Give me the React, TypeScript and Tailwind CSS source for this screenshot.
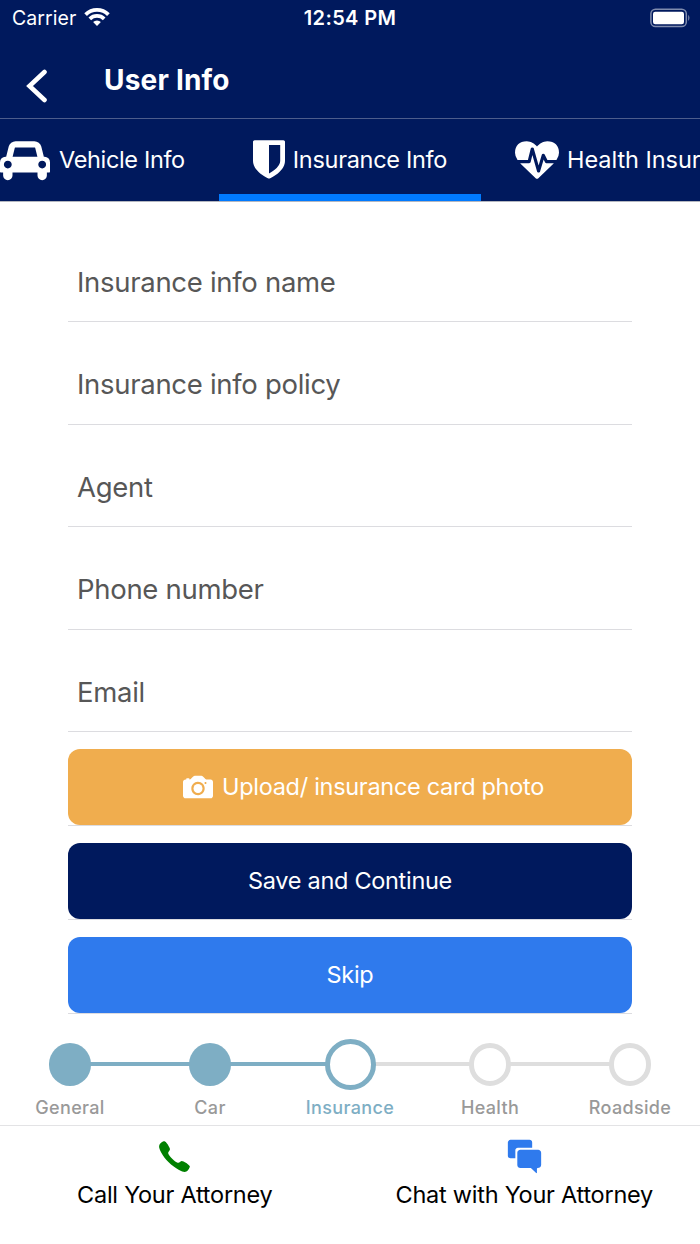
import { ReactNode } from 'react';
import { IoIosCall, IoIosCamera, IoIosChatboxes } from 'react-icons/io';

type StepStatus = 'done' | 'current' | 'pending';

const fields = ['Insurance info name', 'Insurance info policy', 'Agent', 'Phone number', 'Email'];

const steps: { label: string; status: StepStatus }[] = [
  { label: 'General', status: 'done' },
  { label: 'Car', status: 'done' },
  { label: 'Insurance', status: 'current' },
  { label: 'Health', status: 'pending' },
  { label: 'Roadside', status: 'pending' },
];

const circleStyles: Record<StepStatus, string> = {
  done: 'size-[42.5px] bg-[#7eaec4]',
  current: 'size-[51px] border-[5px] border-[#7eaec4] bg-white',
  pending: 'size-[42.5px] border-[5px] border-[#dedede] bg-white',
};

function CarIcon() {
  return (
    <svg viewBox="0 0 2048 1792" className="h-[43.75px] w-[50px] shrink-0" fill="currentColor">
      <path d="M480 1088q0-66-47-113t-113-47-113 47-47 113 47 113 113 47 113-47 47-113zm36-320h1016l-89-357q-2-8-14-17.5t-21-9.5h-768q-9 0-21 9.5t-14 17.5zm1372 320q0-66-47-113t-113-47-113 47-47 113 47 113 113 47 113-47 47-113zm160-96v384q0 14-9 23t-23 9h-96v128q0 80-56 136t-136 56-136-56-56-136v-128h-1024v128q0 80-56 136t-136 56-136-56-56-136v-128h-96q-14 0-23-9t-9-23v-384q0-93 65.5-158.5t158.5-65.5h28l105-419q23-94 104-157.5t179-63.5h768q98 0 179 63.5t104 157.5l105 419h28q93 0 158.5 65.5t65.5 158.5z" />
    </svg>
  );
}

function ShieldIcon() {
  return (
    <svg viewBox="256 0 1280 1792" className="h-[44.8px] w-8 shrink-0" fill="currentColor">
      <path d="M1344 960v-640h-448v1137q119-63 213-137 235-184 235-360zm192-768v768q0 86-33.5 170.5t-83 150-118 127.5-126.5 103-121 77.5-89.5 49.5-42.5 20q-12 6-26 6t-26-6q-16-7-42.5-20t-89.5-49.5-121-77.5-126.5-103-118-127.5-83-150-33.5-170.5v-768q0-26 19-45t45-19h1152q26 0 45 19t19 45z" />
    </svg>
  );
}

function HeartbeatIcon() {
  return (
    <svg viewBox="0 0 1792 1792" className="size-11 shrink-0" fill="currentColor">
      <path d="M1280 1024h305q-5 6-10 10.5t-9 7.5l-3 4-623 600q-18 18-44 18t-44-18l-624-602q-5-2-21-20h369q22 0 39.5-13.5t22.5-34.5l70-281 190 667q6 20 23 33t39 13q21 0 38-13t23-33l146-485 56 112q18 35 57 35zm512-428q0 145-103 300h-369l-111-221q-8-17-25.5-27t-36.5-8q-45 5-56 46l-129 430-196-686q-6-20-23.5-33t-39.5-13-39 13.5-22 34.5l-116 464h-423q-103-155-103-300 0-220 127-344t351-124q62 0 126.5 21.5t120 58 95.5 68.5 76 68q36-36 76-68t95.5-68.5 120-58 126.5-21.5q224 0 351 124t127 344z" />
    </svg>
  );
}

function StatusBar() {
  return (
    <div className="grid h-9 grid-cols-3 items-center pr-[9px] pl-3 text-[20px] leading-9">
      <div className="flex items-center gap-2">
        <span className="text-[19.5px] tracking-[0.05px]">Carrier</span>
        <svg viewBox="0 0 26 20" className="mb-0.5 h-5 w-[26px]" fill="none" stroke="white" strokeWidth="3.8">
          <path d="M1.6 7.6a16.3 16.3 0 0 1 22.8 0" />
          <path d="M5.8 11.8a10.4 10.4 0 0 1 14.4 0" />
          <path d="M13 19l-3.9-3.9a5.6 5.6 0 0 1 7.8 0z" fill="white" stroke="none" />
        </svg>
      </div>
      <div className="-ml-[3px] text-center font-semibold tracking-[0.35px]">12:54 PM</div>
      <div className="flex justify-end">
        <svg viewBox="0 0 41 20" className="mb-px h-5 w-[41px]">
          <rect x="0.9" y="1.2" width="35.4" height="17.4" rx="4.6" fill="none" stroke="#7f8cae" strokeWidth="1.5" />
          <rect x="3" y="3.8" width="31" height="12.4" rx="2.2" fill="white" />
          <path d="M38.2 6.8q2.5 3.1 0 6.2z" fill="#7f8cae" />
        </svg>
      </div>
    </div>
  );
}

function Tab({ icon, label, className }: { icon: ReactNode; label: string; className: string }) {
  return (
    <button className={`flex shrink-0 items-center whitespace-nowrap text-[23.5px] ${className}`}>
      {icon}
      <span>{label}</span>
    </button>
  );
}

function ActionButton({ children, className }: { children: ReactNode; className: string }) {
  return (
    <div className="h-[77px] border-b border-[#dcdce0]">
      <button
        className={`flex h-[76px] w-full items-center justify-center rounded-[12px] text-[23.5px] tracking-[-0.3px] text-white ${className}`}
      >
        {children}
      </button>
    </div>
  );
}

function Stepper() {
  return (
    <div className="mt-[25px] grid h-[86px] grid-cols-5">
      {steps.map((step, index) => (
        <div key={step.label} className="relative flex flex-col items-center">
          {index > 0 && (
            <div
              className={`absolute top-[23px] right-1/2 h-[4px] w-full ${
                step.status === 'pending' ? 'bg-[#dedede]' : 'bg-[#7eaec4]'
              }`}
            />
          )}
          <div className="relative z-10 flex h-[51px] items-center">
            <div className={`rounded-full ${circleStyles[step.status]}`} />
          </div>
          <span
            className={`mt-[6px] text-[18px] leading-[24px] font-medium tracking-[0.35px] ${
              step.status === 'current' ? 'text-[#7eaec4]' : 'text-[#999999]'
            }`}
          >
            {step.label}
          </span>
        </div>
      ))}
    </div>
  );
}

export default function App() {
  return (
    <div className="flex h-[1244px] w-[700px] flex-col overflow-hidden bg-white font-['Inter',sans-serif]">
      <header className="bg-[#00195d] text-white">
        <StatusBar />
        <div className="flex h-[83px] border-b border-[#4d5d8c] pl-[25px]">
          <svg viewBox="0 0 22 36" className="mt-[32px] h-9 w-[22px]" fill="none" stroke="white" strokeWidth="4.6">
            <path d="M19.5 4L4.5 18l15 14" strokeLinecap="round" strokeLinejoin="miter" />
          </svg>
          <h1 className="mt-[26px] ml-[57px] text-[28px] leading-9 font-bold tracking-[0.2px]">User Info</h1>
        </div>
        <nav className="flex h-[83px] overflow-hidden border-b border-[#b4b7c0]">
          <Tab icon={<CarIcon />} label="Vehicle Info" className="w-[219px] gap-[9px] tracking-[-0.35px]" />
          <Tab
            icon={<ShieldIcon />}
            label="Insurance Info"
            className="w-[262px] justify-center gap-2 border-b-[7px] border-[#007aff] pt-[6px] tracking-[-0.3px]"
          />
          <Tab icon={<HeartbeatIcon />} label="Health Insurance" className="gap-2 pl-[34px] tracking-[-0.05px]" />
        </nav>
      </header>

      <main className="px-[68px] pt-[17.5px]">
        {fields.map(field => (
          <input
            key={field}
            placeholder={field}
            className="block h-[102.5px] w-full border-b border-[#dcdce0] px-[9px] pt-[23px] text-[27.5px] tracking-[-0.3px] outline-none placeholder:text-[#575757]"
          />
        ))}
        <div className="mt-[17px] flex flex-col gap-[17px]">
          <ActionButton className="bg-[#f0ad4e]">
            <IoIosCamera className="mr-1 ml-[22px] size-[40px]" />
            Upload/ insurance card photo
          </ActionButton>
          <ActionButton className="bg-[#00195d]">Save and Continue</ActionButton>
          <ActionButton className="bg-[#2f7aed]">Skip</ActionButton>
        </div>
      </main>

      <Stepper />

      <footer className="grid flex-1 grid-cols-2 border-t border-[#e3e3e5] pr-px text-[23.5px] leading-8 tracking-[-0.25px] text-black">
        <button className="flex flex-col items-center pt-[10px]">
          <IoIosCall className="mb-[2px] size-[41px] text-[#008000]" />
          <span>Call Your Attorney</span>
        </button>
        <button className="flex flex-col items-center pt-[10px]">
          <IoIosChatboxes className="mb-[2px] size-[41px] text-[#2f7aed]" />
          <span>Chat with Your Attorney</span>
        </button>
      </footer>
    </div>
  );
}
